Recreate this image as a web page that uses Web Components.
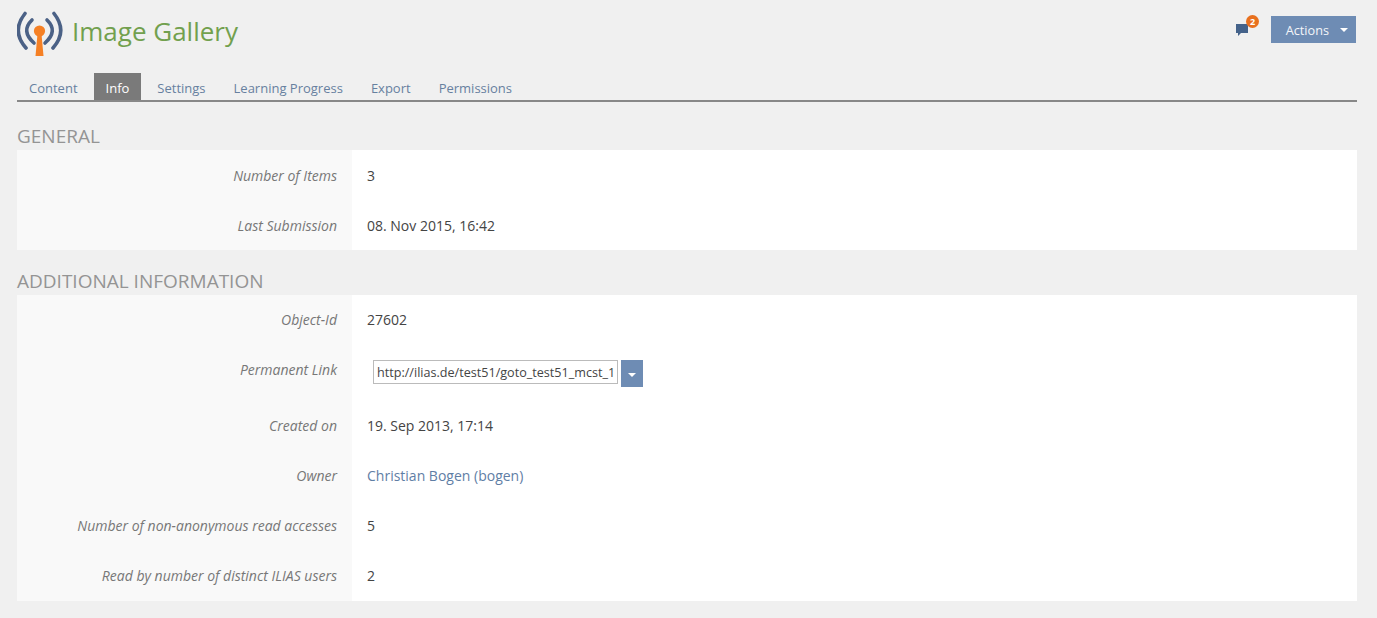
<!DOCTYPE html>
<html>
<head>
<meta charset="utf-8">
<title>Image Gallery</title>
<style>
html, body { margin: 0; height: 100%; }
body {
  background: #f0f0f0;
  color: #444;
  font-family: "Open Sans", "Liberation Sans", sans-serif;
  font-size: 14px;
  overflow: hidden;
}
.page { padding: 0 20px 0 17px; }
</style>
</head>
<body>
<div class="page">
  <page-head title-text="Image Gallery"></page-head>
  <tab-bar active="Info" tabs="Content|Info|Settings|Learning Progress|Export|Permissions"></tab-bar>

  <info-section heading="GENERAL" style="--head-h:48px;--row-top:16px">
    <info-row label="Number of Items">3</info-row>
    <info-row label="Last Submission">08. Nov 2015, 16:42</info-row>
  </info-section>

  <info-section heading="ADDITIONAL INFORMATION" style="--head-h:45px;--row-top:15px">
    <info-row label="Object-Id">27602</info-row>
    <info-row label="Permanent Link" tall><perma-link value="http://ilias.de/test51/goto_test51_mcst_1"></perma-link></info-row>
    <info-row label="Created on">19. Sep 2013, 17:14</info-row>
    <info-row label="Owner"><a href="#" style="color:#5f7ea5;text-decoration:none">Christian Bogen (bogen)</a></info-row>
    <info-row label="Number of non-anonymous read accesses">5</info-row>
    <info-row label="Read by number of distinct ILIAS users">2</info-row>
  </info-section>
</div>

<script>
class PageHead extends HTMLElement {
  constructor() {
    super();
    this.attachShadow({ mode: 'open' });
    this.shadowRoot.innerHTML = `
    <style>
      :host { display: flex; align-items: flex-start; height: 73px; }
      .logo { width: 46px; height: 46px; margin-top: 11px; flex: none; }
      h1 { margin: 12px 0 0 9px; font-size: 26px; line-height: 38px; font-weight: 400; color: #72a04e; flex: 1; }
      .chat { position: relative; width: 14px; height: 16px; margin: 22px 0 0 0; }
      .badge {
        position: absolute; left: 10px; top: -7px; width: 13px; height: 13px; border-radius: 50%;
        background: #e8701e; color: #fff; font-size: 9px; font-weight: 700; line-height: 13px; text-align: center;
      }
      .actions {
        margin: 16px 1px 0 21px; width: 85px; height: 27px; box-sizing: border-box; background: #6e8cb4; color: #f4f6f9;
        display: flex; align-items: center; justify-content: flex-end; padding: 0 8px 0 0; gap: 11px; font-size: 12.7px; border: 0;
        font-family: inherit;
      }
      .caret { width: 0; height: 0; border: 4px solid transparent; border-top-color: #fff; border-bottom: 0; }
    </style>
    <svg class="logo" viewBox="0 0 46 46" fill="none">
      <g stroke="#4b6186" stroke-width="3.6" stroke-linecap="round">
        <path d="M8 2.500Q-6 20 9 37"/>
        <path d="M15 9Q3.500 20 17 32"/>
        <path d="M37 2.500Q51 20 36 37"/>
        <path d="M30 9Q41.500 20 28 32"/>
      </g>
      <circle cx="22.500" cy="20" r="5.600" fill="#f58025"/>
      <path d="M20.500 23h4l2 22h-8z" fill="#f58025"/>
    </svg>
    <h1></h1>
    <div class="chat">
      <svg width="14" height="16" viewBox="0 0 14 16"><path d="M0 2h12v9H5l-3 3v-3H0z" fill="#44628a"/></svg>
      <span class="badge">2</span>
    </div>
    <button class="actions">Actions <span class="caret"></span></button>`;
    this.shadowRoot.querySelector('h1').textContent = this.getAttribute('title-text');
  }
}
customElements.define('page-head', PageHead);

class TabBar extends HTMLElement {
  constructor() {
    super();
    this.attachShadow({ mode: 'open' });
    const active = this.getAttribute('active');
    const tabs = this.getAttribute('tabs').split('|');
    this.shadowRoot.innerHTML = `
    <style>
      :host { display: flex; height: 27px; border-bottom: 2px solid #888; }
      span { padding: 0 12px; margin-right: 4px; line-height: 30px; height: 27px; color: #67809f; font-size: 13px; }
      span.on { background: #7a7a7a; color: #fff; }
    </style>
    ` + tabs.map(t => `<span class="${t === active ? 'on' : ''}">${t}</span>`).join('');
  }
}
customElements.define('tab-bar', TabBar);

class InfoSection extends HTMLElement {
  constructor() {
    super();
    this.attachShadow({ mode: 'open' });
    this.shadowRoot.innerHTML = `
    <style>
      :host { display: block; }
      h2 {
        margin: 0; height: var(--head-h); box-sizing: border-box; padding-bottom: 2px; display: flex; align-items: flex-end;
        font-size: 19px; line-height: 24px; font-weight: 400; color: #949494;
      }
      .body { background: #fff; }
    </style>
    <h2></h2>
    <div class="body"><slot></slot></div>`;
    this.shadowRoot.querySelector('h2').textContent = this.getAttribute('heading');
  }
}
customElements.define('info-section', InfoSection);

class InfoRow extends HTMLElement {
  constructor() {
    super();
    this.attachShadow({ mode: 'open' });
    this.shadowRoot.innerHTML = `
    <style>
      :host { display: grid; grid-template-columns: 335px 1fr; height: 50px; font-size: 14px; }
      :host([tall]) { height: 56px; }
      .label {
        background: #f9f9f9; color: #777; font-style: italic; text-align: right;
        padding: var(--row-top) 15px 0 0; line-height: 20px;
      }
      .value { padding: var(--row-top) 0 0 15px; line-height: 20px; color: #444; }
    </style>
    <div class="label"></div>
    <div class="value"><slot></slot></div>`;
    this.shadowRoot.querySelector('.label').textContent = this.getAttribute('label');
  }
}
customElements.define('info-row', InfoRow);

class PermaLink extends HTMLElement {
  constructor() {
    super();
    this.attachShadow({ mode: 'open' });
    this.shadowRoot.innerHTML = `
    <style>
      :host { display: flex; gap: 3px; margin-left: 6px; align-items: flex-start; }
      input {
        width: 245px; height: 24px; box-sizing: border-box; border: 1px solid #bbb; padding: 0 3px; margin: 0;
        font: 12.6px "Open Sans", "Liberation Sans", sans-serif; color: #444; background: #fff; outline: none;
      }
      button { width: 22px; height: 27px; border: 0; padding: 0; background: #6e8cb4; display: flex; align-items: center; justify-content: center; }
      .caret { width: 0; height: 0; margin-top: 3px; border: 4px solid transparent; border-top-color: #fff; border-bottom: 0; }
    </style>
    <input type="text" readonly>
    <button><span class="caret"></span></button>`;
    this.shadowRoot.querySelector('input').value = this.getAttribute('value');
  }
}
customElements.define('perma-link', PermaLink);
</script>
</body>
</html>
